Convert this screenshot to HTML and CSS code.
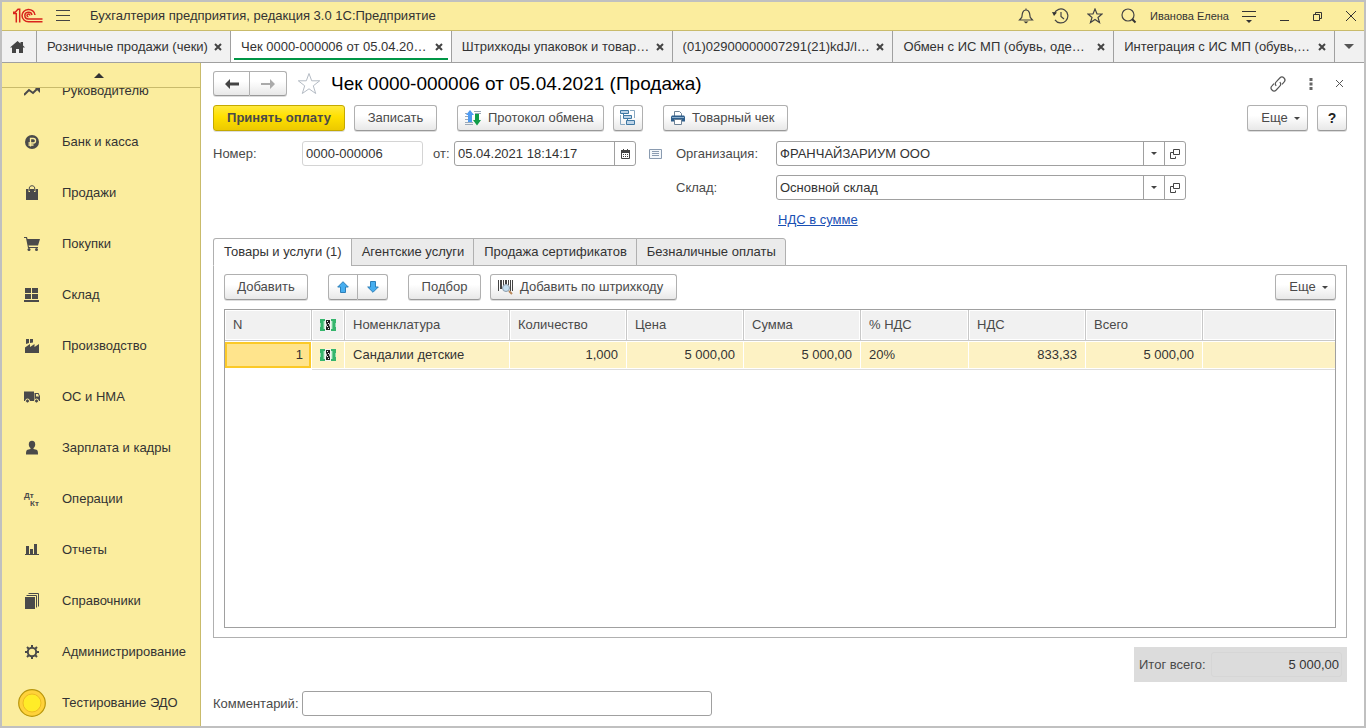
FILE: index.html
```html
<!DOCTYPE html>
<html lang="ru">
<head>
<meta charset="utf-8">
<title>Чек 0000-000006 от 05.04.2021 (Продажа)</title>
<link rel="stylesheet" href="styles.css">
</head>
<body>
<svg class="defs" aria-hidden="true">
  <symbol id="cross" viewBox="0 0 8 8"><path d="M1 1l6 6M7 1l-6 6" fill="none" stroke="#444" stroke-width="2"/></symbol>
  <symbol id="caret" viewBox="0 0 6 3"><path d="M0 0h6L3 3z" fill="#444"/></symbol>
  <symbol id="open" viewBox="0 0 10 10"><path d="M3.500 3.500h-3v6h5v-2M3.500 .5h6v5h-6z" fill="none" stroke="#444"/></symbol>
  <symbol id="money" viewBox="0 0 16 12"><path d="M0 0h16v12H0z" fill="#35b56c"/><path d="M3 2h10v8H3z" fill="#6fcb95"/><path d="M4 2h8v8H4z" fill="#c9eed7"/><path d="M0 4h1v4H0zM15 4h1v4h-1z" fill="#8fd9ae"/><path d="M5 0h6v12H5z" fill="#f4f4f4"/><path d="M6 1h4v3L9 6l1 2v3H6V8l1-2-1-2z" fill="#222"/><path d="M7 2h1v1H7zM8 4h1v1H8zM7 7h1v1H7zM8 9h1v1H8z" fill="#fff"/></symbol>
</svg>
<div class="app">
  <header class="titlebar">
    <svg class="logo" width="30" height="16" viewBox="0 0 30 16" role="img" aria-label="1С"><g fill="none" stroke="#d9241c" stroke-width="1.500"><path d="M0 4.200h2.200L5 1.200h1.700V14.500M3.300 5V14.500"/><path d="M0 5.500h3.300"/><path d="M22 7A6.500 6.200 0 1 0 15.500 13.800H29.500"/><path d="M19 7A3.600 3.400 0 1 0 15.400 11H29.500"/><path d="M16.800 7.500a1.400 1.300 0 1 0-1.400 1.200"/></g></svg>
    <button class="bare" aria-label="Меню"><svg width="14" height="12" viewBox="0 0 14 12"><path d="M0 .5h14M0 5.500h14M0 10.500h14" stroke="#444"/></svg></button>
    <span class="app-name">Бухгалтерия предприятия, редакция 3.0 1С:Предприятие</span>
    <div class="tools">
      <button class="bare" aria-label="Уведомления"><svg width="16" height="16" viewBox="0 0 16 16"><path d="M8 .5V2M1.500 12h13L12.300 9.500C11.800 8 12 6.500 11.300 4.500 10.800 3 9.500 2 8 2S5.200 3 4.700 4.500C4 6.500 4.200 8 3.700 9.500z" fill="none" stroke="#444" stroke-width="1.200"/><path d="M5.500 13.500h5L8 15.500z" fill="#333"/></svg></button>
      <button class="bare" aria-label="История"><svg width="17" height="16" viewBox="0 0 17 16"><path d="M2.300 5.500A7 7 0 1 1 3 11.800M9 4v4.500l3 2.500" fill="none" stroke="#444" stroke-width="1.200"/><path d="M0 4l5 .5L2 8z" fill="#333"/></svg></button>
      <button class="bare" aria-label="Избранное"><svg width="16" height="16" viewBox="0 0 16 16"><path d="M8 1l2 5h5l-4 3.500 1.500 5L8 11.500l-4.500 3 1.500-5L1 6h5z" fill="none" stroke="#444" stroke-width="1.200"/></svg></button>
      <button class="bare" aria-label="Поиск"><svg width="16" height="16" viewBox="0 0 16 16"><circle cx="7" cy="7" r="6" fill="none" stroke="#444" stroke-width="1.200"/><path d="M11.300 11.300L14.500 14.500" stroke="#333" stroke-width="2"/></svg></button>
      <button class="bare user">Иванова Елена</button>
      <button class="bare" aria-label="Сервис"><svg width="14" height="14" viewBox="0 0 14 14"><path d="M0 2.500h14M0 7.500h14" stroke="#333"/><path d="M4 11h6l-3 3z" fill="#333"/></svg></button>
      <button class="bare" aria-label="Свернуть"><svg width="9" height="10" viewBox="0 0 9 10"><path d="M0 9.500h9" stroke="#333"/></svg></button>
      <button class="bare" aria-label="Окно"><svg width="9" height="9" viewBox="0 0 9 9"><path d="M.5 2.500h6v6h-6zM2.500 2V.5h6v6H7" fill="none" stroke="#333"/></svg></button>
      <button class="bare" aria-label="Закрыть"><svg width="10" height="10" viewBox="0 0 10 10"><path d="M0 0l10 10M10 0L0 10" stroke="#333"/></svg></button>
    </div>
  </header>

  <nav class="tabs" aria-label="Открытые окна">
    <button class="tab-home" aria-label="Начальная страница"><svg width="15" height="12" viewBox="0 0 15 12"><path d="M7.500 0l3 2.500V1H13v3.500L15 6.500h-2V12H9V8H6v4H2V6.500H0z" fill="#444"/></svg></button>
    <div class="tab tab-first"><a href="#">Розничные продажи (чеки)</a><button class="bare" aria-label="Закрыть"><svg width="8" height="8"><use href="#cross"/></svg></button></div>
    <div class="tab active"><a href="#">Чек 0000-000006 от 05.04.20…</a><button class="bare" aria-label="Закрыть"><svg width="8" height="8"><use href="#cross"/></svg></button></div>
    <div class="tab"><a href="#">Штрихкоды упаковок и товар…</a><button class="bare" aria-label="Закрыть"><svg width="8" height="8"><use href="#cross"/></svg></button></div>
    <div class="tab"><a href="#">(01)02900000007291(21)kdJ/l…</a><button class="bare" aria-label="Закрыть"><svg width="8" height="8"><use href="#cross"/></svg></button></div>
    <div class="tab"><a href="#">Обмен с ИС МП (обувь, оде…</a><button class="bare" aria-label="Закрыть"><svg width="8" height="8"><use href="#cross"/></svg></button></div>
    <div class="tab"><a href="#">Интеграция с ИС МП (обувь,…</a><button class="bare" aria-label="Закрыть"><svg width="8" height="8"><use href="#cross"/></svg></button></div>
    <button class="tab-more" aria-label="Все окна"><svg width="10" height="5" viewBox="0 0 10 5"><path d="M0 0h10L5 5z" fill="#555"/></svg></button>
  </nav>

  <div class="body">
    <aside class="sidebar">
      <button class="scroll-up" aria-label="Вверх"><svg width="10" height="5" viewBox="0 0 10 5"><path d="M0 5h10L5 0z" fill="#333"/></svg></button>
      <nav class="sections" aria-label="Разделы">
        <a href="#"><svg viewBox="0 0 16 16"><path d="M0 12l5-5 4 3 4.500-4.500" fill="none" stroke="#4a4a4a" stroke-width="2"/><path d="M10.500 4.500H16V10z" fill="#4a4a4a"/></svg>Руководителю</a>
        <a href="#"><svg viewBox="0 0 16 16"><circle cx="8" cy="8" r="7" fill="#4a4a4a"/><path d="M6.500 12.500v-8h2.800a2.200 2.200 0 0 1 0 4.500H4.500M4.500 11h5" fill="none" stroke="#fbed9e" stroke-width="1.300"/></svg>Банк и касса</a>
        <a href="#"><svg viewBox="0 0 16 16"><path d="M2 4h2.500v3H6V4h4v3h1.500V4H14v11H2z" fill="#4a4a4a"/><path d="M5.300 6V3c0-3 5.400-3 5.400 0v3" fill="none" stroke="#4a4a4a"/></svg>Продажи</a>
        <a href="#"><svg viewBox="0 0 16 16"><path d="M0 1h3l.5 2H16l-2 6.500H4.500L5 11h9v1H4L2 2H0z" fill="#4a4a4a"/><circle cx="5" cy="13.500" r="1.500" fill="#4a4a4a"/><circle cx="12.500" cy="13.500" r="1.500" fill="#4a4a4a"/></svg>Покупки</a>
        <a href="#"><svg viewBox="0 0 16 16"><path d="M1 1h6v5H1zM8 1h6v5H8zM1 7h6v5H1zM8 7h6v5H8zM0 13h15v2H0z" fill="#4a4a4a"/></svg>Склад</a>
        <a href="#"><svg viewBox="0 0 16 16"><path d="M1 15V9.500l5-3.500v3l4.500-3v3L15 6v9z" fill="#4a4a4a"/><path d="M2 1h3v4L2 6zM6 1h3v3.500L6 5z" fill="#4a4a4a"/></svg>Производство</a>
        <a href="#"><svg viewBox="0 0 16 16"><path d="M0 2.500h10V12H0zM10.500 4h4L16 7v5h-5.500z" fill="#4a4a4a"/><path d="M12 5h2l1 2.500h-3z" fill="#fbed9e"/><g fill="#4a4a4a" stroke="#fbed9e"><circle cx="3.500" cy="12" r="2"/><circle cx="12.500" cy="12" r="2"/></g></svg>ОС и НМА</a>
        <a href="#"><svg viewBox="0 0 16 16"><ellipse cx="8" cy="4.500" rx="3.200" ry="3.700" fill="#4a4a4a"/><path d="M6.500 7h3v2l3 .7c1.200.3 1.500 1.800 1.500 4.800H2c0-3 .3-4.500 1.500-4.800l3-.7z" fill="#4a4a4a"/></svg>Зарплата и кадры</a>
        <a href="#"><svg viewBox="0 0 16 16" class="dtkt"><text x="0" y="7">Дт</text><text x="6" y="15">Кт</text></svg>Операции</a>
        <a href="#"><svg viewBox="0 0 16 16"><path d="M2 4h3v8H2zM6 7h3v5H6zM10 2h3v10h-3zM1 12h14v1H1z" fill="#4a4a4a"/></svg>Отчеты</a>
        <a href="#"><svg viewBox="0 0 16 16"><path d="M1 4h10v12H1z" fill="#4a4a4a"/><path d="M2.500 2.500h10v12M4.500.5h10v13" fill="none" stroke="#4a4a4a"/></svg>Справочники</a>
        <a href="#"><svg viewBox="0 0 16 16"><circle cx="8" cy="8" r="4.200" fill="none" stroke="#4a4a4a" stroke-width="2"/><path d="M8 1v3M8 12v3M1 8h3M12 8h3M3 3l2.200 2.200M10.800 10.800L13 13M13 3l-2.200 2.200M5.200 10.800L3 13" stroke="#4a4a4a" stroke-width="2"/></svg>Администрирование</a>
        <a href="#"><svg viewBox="0 0 28 28" class="coin"><circle cx="14" cy="14" r="13.300" fill="#ffd23a" stroke="#b8960c" stroke-width="1.200"/><circle cx="14" cy="14" r="9" fill="#ffec28" stroke="#eebb22"/></svg>Тестирование ЭДО</a>
      </nav>
    </aside>

    <main class="form">
      <div class="form-head">
        <div class="btn-group">
          <button class="btn" aria-label="Назад"><svg width="14" height="10" viewBox="0 0 14 10"><path d="M0 5l5-5v3.500h9v3H5V10z" fill="#444"/></svg></button><button class="btn" aria-label="Вперед"><svg width="14" height="10" viewBox="0 0 14 10"><path d="M14 5L9 0v4H0v2h9v4z" fill="#aaa"/></svg></button>
        </div>
        <button class="bare" aria-label="В избранное"><svg width="24" height="23" viewBox="0 0 24 23"><path d="M12 1.500l2.700 7.300h8l-6.400 5 2.400 7.700L12 16.800l-6.700 4.700 2.400-7.700-6.400-5h8z" fill="none" stroke="#b4bbc4"/></svg></button>
        <h1>Чек 0000-000006 от 05.04.2021 (Продажа)</h1>
        <div class="head-tools">
          <button class="bare" aria-label="Ссылка"><svg width="16" height="16" viewBox="0 0 16 16"><g fill="none" stroke="#555" stroke-width="1.200"><path d="M6.200 9.800a3 3 0 0 1 .2-4.200l3.400-3.600a2.900 2.900 0 0 1 4.200 4.200l-2 2.100"/><path d="M9.800 6.200a3 3 0 0 1-.2 4.200L6.200 14A2.900 2.900 0 0 1 2 9.800l2-2.100"/></g></svg></button>
          <button class="bare" aria-label="Действия"><svg width="4" height="12" viewBox="0 0 4 12"><path d="M.5 0h3v3h-3zM.5 4.500h3v3h-3zM.5 9h3v3h-3z" fill="#666"/></svg></button>
          <button class="bare" aria-label="Закрыть форму"><svg width="7" height="7" viewBox="0 0 7 7"><path d="M0 0l7 7M7 0L0 7" stroke="#555"/></svg></button>
        </div>
      </div>

      <div class="toolbar main-tools">
        <button class="btn primary">Принять оплату</button>
        <button class="btn save">Записать</button>
        <button class="btn with-icon protocol"><svg width="16" height="16" viewBox="0 0 16 16"><path d="M9 1.500h7M10 3.500h6M0 6.500h3M0 9.500h3M0 12.500h8M0 14.500h8M0 3.500h2" stroke="#9aa9b8"/><path d="M5 0l4 5H7v7H3V5H1z" fill="#4f9bf2"/><path d="M10 4h4v6h2l-4 5.500L8 10h2z" fill="#109c48"/></svg>Протокол обмена</button>
        <button class="btn square" aria-label="Структура подчиненности"><svg width="16" height="16" viewBox="0 0 16 16"><path d="M.5 5v9.500H5M10 .5h4.500V8" fill="none" stroke="#88a9c2"/><path d="M.5.5h8v3h-8zM3.500 5.500h8v3h-8zM6.500 10.500h8v4h-8zM3.500 3.500v2M7.500 8.500v2" fill="#bdd4e8" stroke="#3f78a3"/></svg></button>
        <button class="btn with-icon receipt"><svg width="14" height="14" viewBox="0 0 14 14"><path d="M3.500 5V.5h5l2 2V5" fill="#fff" stroke="#6d8296"/><path d="M1 4.500h12l1 1v5H0v-5z" fill="#2f5f8c"/><path d="M3.500 8.500h7v5h-7z" fill="#fff" stroke="#6d8296"/><path d="M1 6.500h12" stroke="#8db0cf"/></svg>Товарный чек</button>
        <button class="btn more">Еще<svg width="6" height="3"><use href="#caret"/></svg></button>
        <button class="btn square help">?</button>
      </div>

      <div class="fields">
        <div class="field-line">
          <label class="lbl" for="num">Номер:</label>
          <input class="input number" id="num" value="0000-000006" readonly>
          <label for="date">от:</label>
          <div class="input combo date"><input id="date" value="05.04.2021 18:14:17"><button aria-label="Календарь"><svg width="9" height="10" viewBox="0 0 9 10"><path d="M.5 1.500h8v8h-8z" fill="#fff" stroke="#444"/><path d="M0 1h9v3H0zM2 0h1v1H2zM6 0h1v1H6z" fill="#444"/><path d="M2 5.500h5M2 7.500h5" stroke="#444" stroke-dasharray="1 1"/></svg></button></div>
          <svg class="note" width="13" height="10" viewBox="0 0 13 10"><path d="M.5.5h12v9H.5z" fill="#f4f7fa" stroke="#8a9bb0"/><path d="M3 2.500h7M3 4.500h7M3 6.500h7" stroke="#8a9bb0"/></svg>
        </div>
        <div class="field-grid">
          <label for="org">Организация:</label>
          <div class="input combo pick"><select id="org"><option>ФРАНЧАЙЗАРИУМ ООО</option></select><span class="arrow"><svg width="6" height="3"><use href="#caret"/></svg></span><button aria-label="Открыть организацию"><svg width="10" height="10"><use href="#open"/></svg></button></div>
          <label for="store">Склад:</label>
          <div class="input combo pick"><select id="store"><option>Основной склад</option></select><span class="arrow"><svg width="6" height="3"><use href="#caret"/></svg></span><button aria-label="Открыть склад"><svg width="10" height="10"><use href="#open"/></svg></button></div>
          <a class="vat" href="#">НДС в сумме</a>
        </div>
      </div>

      <div class="page-tabs" role="tablist">
        <button role="tab" aria-selected="true">Товары и услуги (1)</button>
        <button role="tab" aria-selected="false">Агентские услуги</button>
        <button role="tab" aria-selected="false">Продажа сертификатов</button>
        <button role="tab" aria-selected="false">Безналичные оплаты</button>
      </div>
      <section class="page">
        <div class="toolbar">
          <button class="btn add">Добавить</button>
          <div class="btn-group arrows">
            <button class="btn" aria-label="Вверх"><svg width="12" height="12" viewBox="0 0 12 12"><path d="M6 .7l5.300 5.300H8.500v5.500h-5V6H.7z" fill="#46aef0" stroke="#2d7fb8"/></svg></button><button class="btn" aria-label="Вниз"><svg width="12" height="12" viewBox="0 0 12 12"><path d="M6 11.300L.7 6h2.800V.5h5V6h2.800z" fill="#46aef0" stroke="#2d7fb8"/></svg></button>
          </div>
          <button class="btn select">Подбор</button>
          <button class="btn with-icon barcode"><svg width="15" height="16" viewBox="0 0 15 16"><path d="M0 1h1v11H0zM2 1h2v9H2zM5 1h1v6H5zM7 1h2v4H7zM10 1h1v5h-1zM12 1h1v11h-1zM14 1h1v11h-1z" fill="#444"/><circle cx="8" cy="9" r="3.500" fill="#c4def0" stroke="#8c9cab"/><path d="M11 12l3 3" stroke="#b78658" stroke-width="2"/></svg>Добавить по штрихкоду</button>
          <button class="btn more">Еще<svg width="6" height="3"><use href="#caret"/></svg></button>
        </div>
        <div class="grid">
          <table>
            <colgroup><col class="c-n"><col class="c-icon"><col class="c-name"><col class="c-num"><col class="c-num"><col class="c-num"><col class="c-rate"><col class="c-num"><col class="c-num"><col></colgroup>
            <thead><tr><th>N</th><th class="ic"><svg width="16" height="12" role="img" aria-label="Оплата"><use href="#money"/></svg></th><th>Номенклатура</th><th>Количество</th><th>Цена</th><th>Сумма</th><th>% НДС</th><th>НДС</th><th>Всего</th><th></th></tr></thead>
            <tbody><tr><td class="r current">1</td><td class="ic"><svg width="16" height="12"><use href="#money"/></svg></td><td>Сандалии детские</td><td class="r">1,000</td><td class="r">5 000,00</td><td class="r">5 000,00</td><td>20%</td><td class="r">833,33</td><td class="r">5 000,00</td><td></td></tr></tbody>
          </table>
        </div>
      </section>

      <div class="total"><label for="sum">Итог всего:</label><input id="sum" value="5 000,00" readonly></div>
      <div class="comment"><label class="lbl" for="comment">Комментарий:</label><input class="input" id="comment"></div>
    </main>
  </div>
</div>
</body>
</html>
```
FILE: styles.css
```css
* { box-sizing: border-box; }
body {
  margin: 0;
  font: 13px/16px "Liberation Sans", Arial, sans-serif;
  color: #333;
}
button, input, select { font: inherit; color: inherit; margin: 0; }
svg { display: block; flex: none; }
.defs { position: absolute; width: 0; height: 0; }
.bare { border: 0; padding: 0; background: none; }

.app {
  height: 100vh;
  display: flex;
  flex-direction: column;
  border: 2px solid #c0c0c0;
  background: #fff;
  overflow: hidden;
}

/* title bar */
.titlebar {
  flex: none;
  height: 29px;
  display: flex;
  align-items: center;
  padding: 0 8px 0 11px;
  background: #fbed9e;
  border-bottom: 1px solid #c9bb6b;
}
.logo { margin-right: 13px; }
.app-name { margin-left: 20px; white-space: nowrap; }
.tools { margin-left: auto; display: flex; align-items: center; gap: 18px; }
.tools .user { font-size: 11px; margin: 0 -5px; }
.tools .bare:nth-child(n+7) { margin-left: 6px; }

/* window tabs */
.tabs {
  flex: none;
  display: flex;
  height: 32px;
  background: #f1f1f1;
  border-bottom: 1px solid #a0a0a0;
}
.tab-home, .tab-more {
  flex: none;
  display: grid;
  place-items: center;
  border: 0;
  padding: 0;
  background: none;
}
.tab-home { width: 35px; padding-right: 4px; border-right: 1px solid #a0a0a0; }
.tab-more { width: 29px; }
.tab {
  flex: 1 1 0;
  min-width: 0;
  display: flex;
  align-items: center;
  justify-content: space-between;
  padding: 0 8px 0 10px;
  border-right: 1px solid #a0a0a0;
}
.tab-first { flex: 0 0 194px; }
.tab a { color: inherit; text-decoration: none; white-space: nowrap; overflow: hidden; }
.tab.active {
  background: linear-gradient(#009646, #009646) center bottom 2px / calc(100% - 6px) 2px no-repeat #fff;
}

.body { flex: 1; min-height: 0; display: flex; }

/* sections panel */
.sidebar {
  flex: none;
  width: 199px;
  display: flex;
  flex-direction: column;
  background: #fbed9e;
  border-right: 1px solid #c9bb6b;
}
.scroll-up {
  flex: none;
  height: 25px;
  display: grid;
  place-items: center;
  padding: 0 4px 0 0;
  border: 0;
  border-bottom: 1px solid #c9bb6b;
  background: none;
}
.sections { flex: 1; min-height: 0; overflow: hidden; }
.sections a {
  display: flex;
  align-items: center;
  gap: 22px;
  height: 51px;
  padding-left: 22px;
  color: inherit;
  text-decoration: none;
}
.sections a:first-child { margin-top: -23px; }
.sections svg { width: 16px; height: 16px; }
.sections .coin { width: 28px; height: 28px; margin: 0 -6px; }
.dtkt { font: bold 8px "Liberation Sans", Arial, sans-serif; fill: #4a4a4a; overflow: visible; }

/* document form */
.form {
  flex: 1;
  min-width: 0;
  display: flex;
  flex-direction: column;
  padding: 8px 17px 10px 12px;
  color: #4a4a4a;
}
.form-head { display: flex; align-items: center; height: 25px; }
.form-head h1 { margin: 0 0 0 10px; font-size: 19px; line-height: 24px; font-weight: normal; color: #000; }
.form-head > .bare { margin-left: 10px; }
.head-tools { margin-left: auto; display: flex; align-items: center; gap: 23px; padding-right: 4px; }

.btn {
  display: inline-flex;
  align-items: center;
  justify-content: center;
  height: 26px;
  padding: 0;
  border: 1px solid #b0b0b0;
  border-bottom-color: #999;
  border-radius: 3px;
  background: linear-gradient(#fff 40%, #e8e8e8);
  box-shadow: 0 1px 0 #ddd;
  color: #4a4a4a;
  white-space: nowrap;
}
.btn-group { display: flex; }
.btn-group .btn { width: 37px; height: 25px; }
.btn-group .btn:first-child { border-radius: 3px 0 0 3px; }
.btn-group .btn:last-child { border-radius: 0 3px 3px 0; border-left: 0; }
.toolbar { display: flex; }
.main-tools { margin-top: 9px; }
.primary {
  width: 132px;
  font-weight: bold;
  border-color: #c4a900;
  background: linear-gradient(#ffe93c, #ffe000 45%, #ecc900);
}
.with-icon { justify-content: flex-start; padding-left: 7px; gap: 7px; }
.save { width: 83px; margin-left: 9px; }
.protocol { width: 147px; margin-left: 20px; }
.square { width: 30px; margin-left: 9px; }
.receipt { width: 125px; margin-left: 20px; }
.more { width: 61px; margin-left: auto; gap: 6px; padding-left: 6px; }
.help { font-size: 14px; font-weight: bold; color: #222; }

.fields { display: flex; align-items: flex-start; margin-top: 10px; }
.lbl { flex: none; width: 89px; }
.field-line { flex: none; width: 463px; display: flex; align-items: center; }
.input {
  height: 25px;
  padding: 0 3px;
  border: 1px solid #a0a0a0;
  border-radius: 3px;
  background: #fff;
  color: #333;
}
.number { width: 121px; margin-right: 10px; border-color: #d4d4d4; }
.combo { display: grid; padding: 0; }
.combo input, .combo select {
  min-width: 0;
  width: 100%;
  border: 0;
  padding: 0 3px;
  background: none;
  appearance: none;
  grid-row: 1;
}
.combo button, .arrow {
  display: grid;
  place-items: center;
  padding: 0;
  border: 0;
  border-left: 1px solid #a0a0a0;
  background: none;
  grid-row: 1;
}
.date { width: 182px; margin-left: auto; grid-template-columns: 1fr 21px; }
.pick { grid-template-columns: 1fr 21px 21px; }
.pick select { grid-column: 1 / 3; }
.arrow { grid-column: 2; pointer-events: none; }
.note { margin: 0 14px 0 13px; }
.field-grid {
  flex: 0 1 510px;
  display: grid;
  grid-template-columns: 100px 1fr;
  row-gap: 9px;
  align-items: center;
}
.vat { grid-column: 2; margin: 3px 0 0 2px; color: #1a50b4; justify-self: start; }

.page-tabs { display: flex; margin-top: 10px; position: relative; }
.page-tabs button {
  height: 28px;
  padding: 0 9px 1px 10px;
  margin-right: -1px;
  border: 1px solid #b0b0b0;
  background: #ebebeb;
  color: #333;
  white-space: nowrap;
}
.page-tabs button:first-child { border-radius: 3px 0 0 0; }
.page-tabs button:last-child { border-radius: 0 3px 0 0; }
.page-tabs [aria-selected="true"] { background: #fff; border-bottom-color: #fff; }
.page {
  flex: 1;
  min-height: 0;
  display: flex;
  flex-direction: column;
  margin-top: -1px;
  padding: 8px 10px 9px;
  border: 1px solid #b0b0b0;
}
.add { width: 84px; }
.arrows { margin: 0 20px; }
.arrows .btn { width: 30px; height: 26px; }
.select { width: 73px; }
.barcode { width: 187px; margin-left: 9px; }

.grid { flex: 1; min-height: 0; margin-top: 9px; border: 1px solid #a0a0a0; overflow: hidden; }
table { width: 100%; table-layout: fixed; border-collapse: separate; border-spacing: 0; }
.c-n { width: 87px; }
.c-icon { width: 33px; }
.c-name { width: 165px; }
.c-num { width: 117px; }
.c-rate { width: 108px; }
th, td { padding: 0 8px; text-align: left; white-space: nowrap; }
th {
  height: 31px;
  background: #f1f1f1;
  border: 1px solid #c8c8c8;
  border-width: 0 1px 1px 0;
  box-shadow: inset 0 0 0 1px #fff;
  font-weight: normal;
  color: #4a4a4a;
}
td {
  height: 28px;
  background: #fdf2c4;
  border: 1px solid #fff;
  border-width: 1px 1px 1px 0;
  box-shadow: 0 1px 0 #ddd;
  color: #333;
}
th:last-child, td:last-child { border-right: 0; }
.r { text-align: right; }
.ic { padding: 0 0 0 8px; }
.current { background: #ffe48c; box-shadow: inset 0 0 0 2px #fbc928; }

.total {
  align-self: flex-end;
  display: flex;
  align-items: center;
  justify-content: space-between;
  width: 213px;
  height: 35px;
  margin-top: 9px;
  padding: 0 5px;
  background: #dcdcdc;
}
.total input {
  width: 131px;
  height: 25px;
  padding: 0 2px;
  border: 1px solid #d6d6d6;
  border-radius: 3px;
  background: none;
  text-align: right;
  color: #333;
}
.comment { display: flex; align-items: center; margin-top: 9px; }
.comment .input { flex: 0 1 410px; min-width: 0; }
```
